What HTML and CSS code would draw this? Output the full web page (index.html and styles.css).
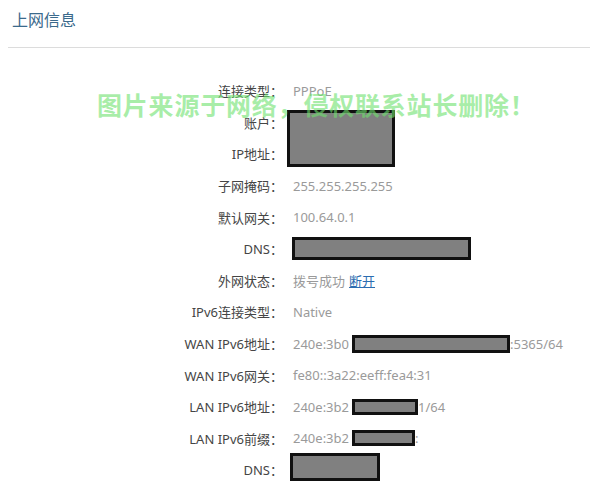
FILE: index.html
```html
<!DOCTYPE html>
<html lang="zh-CN">
<head>
  <meta charset="UTF-8" />
  <meta name="viewport" content="width=device-width, initial-scale=1.0"/>
  <title>上网信息</title>
  <link rel="stylesheet" href="styles.css">
</head>
<body>
  <div class="page">
    <div class="panel-head">
      <h2 class="panel-title">上网信息</h2>
    </div>

    <div class="info-grid">
      <div class="info-label">连接类型：</div>
      <div class="info-value">PPPoE</div>

      <div class="info-label">账户：</div>
      <div class="info-value span-2"><span class="mask mask-account"></span></div>
      <div class="info-label">IP地址：</div>

      <div class="info-label">子网掩码：</div>
      <div class="info-value">255.255.255.255</div>

      <div class="info-label">默认网关：</div>
      <div class="info-value">100.64.0.1</div>

      <div class="info-label">DNS：</div>
      <div class="info-value"><span class="mask mask-dns"></span></div>

      <div class="info-label">外网状态：</div>
      <div class="info-value">拨号成功 <a href="#" class="link">断开</a></div>

      <div class="info-label">IPv6连接类型：</div>
      <div class="info-value">Native</div>

      <div class="info-label">WAN IPv6地址：</div>
      <div class="info-value">240e:3b0<span class="mask mask-wan"></span>:5365/64</div>

      <div class="info-label">WAN IPv6网关：</div>
      <div class="info-value">fe80::3a22:eeff:fea4:31</div>

      <div class="info-label">LAN IPv6地址：</div>
      <div class="info-value">240e:3b2<span class="mask mask-lan"></span>1/64</div>

      <div class="info-label">LAN IPv6前缀：</div>
      <div class="info-value">240e:3b2<span class="mask mask-prefix"></span>:</div>

      <div class="info-label">DNS：</div>
      <div class="info-value"><span class="mask mask-dns2"></span></div>
    </div>

    <!-- 水印 -->
    <div class="watermark">图片来源于网络，侵权联系站长删除！</div>
  </div>
</body>
</html>
```

FILE: styles.css
```css
body {
    font-family: "Noto Sans", "Noto Sans CJK SC", sans-serif;
    margin: 0;
    padding: 0;
    background-color: #fff;
    color: #444;
}

.page {
    position: relative;
    width: 590px;
    height: 500px;
    overflow: hidden;
}

/* 标题栏 */
.panel-head {
    margin-left: 8px;
    padding-left: 4px;
    height: 48px;
    border-bottom: 1px solid #dcdcdc;
    box-sizing: border-box;
}

.panel-title {
    margin: 0;
    padding-top: 8px;
    font-size: 16px;
    font-weight: normal;
    line-height: 24px;
    color: #3b6a8c;
}

/* 信息列表 */
.info-grid {
    display: grid;
    grid-template-columns: 283px 1fr;
    grid-auto-rows: 31.6px;
    margin-top: 27px;
    font-size: 13px;
}

.info-label {
    grid-column: 1;
    display: flex;
    align-items: center;
    justify-content: flex-end;
    color: #454545;
    white-space: nowrap;
}

.info-value {
    grid-column: 2;
    display: flex;
    align-items: center;
    padding-left: 10px;
    color: #9a9a9a;
    white-space: nowrap;
}

.info-value.span-2 {
    grid-row: span 2;
}

.link {
    color: #2b6cb0;
    margin-left: 4px;
}

/* 打码块 */
.mask {
    display: inline-block;
    box-sizing: border-box;
    border: 3px solid #111;
    background-color: #808080;
    flex-shrink: 0;
}

.mask-account {
    width: 108px;
    height: 57px;
    margin-left: -6px;
}

.mask-dns {
    width: 179px;
    height: 23px;
    margin-left: -1px;
}

.mask-wan {
    width: 158px;
    height: 18px;
    margin-left: 3px;
}

.mask-lan {
    width: 66px;
    height: 16px;
    margin-left: 3px;
}

.mask-prefix {
    width: 63px;
    height: 16px;
    margin-left: 3px;
}

.mask-dns2 {
    width: 90px;
    height: 28px;
    margin-left: -3px;
    margin-top: -6px;
}

/* 水印 */
.watermark {
    position: absolute;
    left: 97px;
    top: 87px;
    font-family: "Noto Sans CJK SC", sans-serif;
    font-size: 25px;
    font-weight: bold;
    letter-spacing: 0.8px;
    line-height: 34px;
    color: rgba(110, 226, 110, 0.6);
    white-space: nowrap;
}
```
